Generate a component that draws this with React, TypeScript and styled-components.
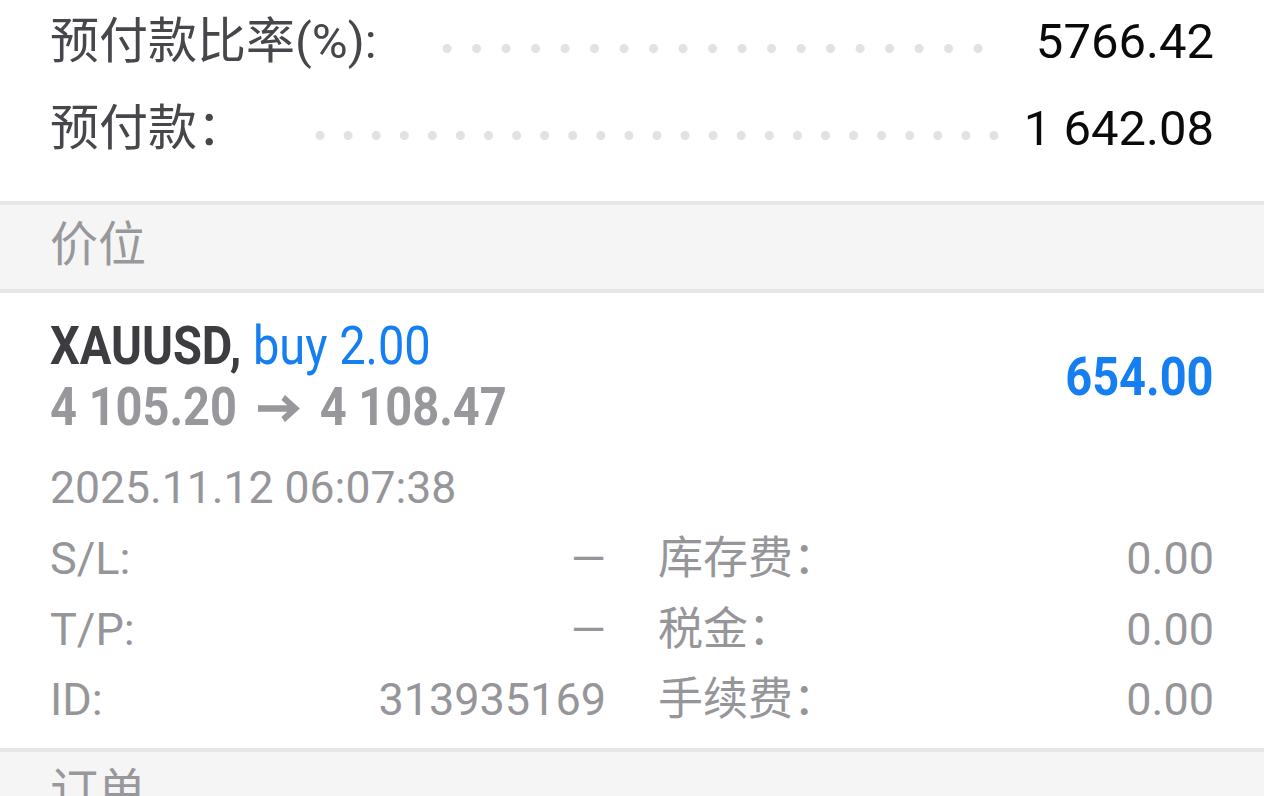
import React from "react";
import styled, { createGlobalStyle } from "styled-components";

const GlobalStyle = createGlobalStyle`
  html, body {
    margin: 0;
    padding: 0;
    background: #ffffff;
    overflow: hidden;
  }
  body {
    font-family: Roboto, "Noto Sans CJK SC", "Noto Sans", sans-serif;
    -webkit-font-smoothing: antialiased;
  }
`;

const Page = styled.div`
  width: 1264px;
  height: 796px;
  overflow: hidden;
  background: #ffffff;
  display: flex;
  flex-direction: column;
`;

const Summary = styled.div`
  display: flex;
  flex-direction: column;
  gap: 4px;
  padding: 0 50px 31px;
`;

const SummaryRow = styled.div`
  display: flex;
  align-items: center;
  height: 83px;
  line-height: 83px;
  font-size: 49px;
`;

const SummaryLabel = styled.span`
  color: #46464b;
  white-space: nowrap;
`;

const SummaryValue = styled.span`
  color: #0a0a0a;
  white-space: nowrap;
`;

const Leader = styled.span<{ $left: number; $right: number }>`
  flex: 1;
  height: 9px;
  margin: 13px ${(p) => p.$right}px 0 ${(p) => p.$left}px;
  background-image: radial-gradient(circle at 14px 4.5px, #e2e2e2 4.2px, transparent 4.8px);
  background-size: 28px 9px;
  background-repeat: space no-repeat;
`;

const SectionHeader = styled.div`
  flex: none;
  display: flex;
  align-items: center;
  box-sizing: content-box;
  height: 80px;
  padding: 0 50px 4px;
  background: #f5f5f5;
  border-top: 4px solid #e6e6e6;
  border-bottom: 4px solid #e6e6e6;
  font-size: 48px;
  line-height: 80px;
  color: #98989c;
`;

const Card = styled.div`
  flex: none;
  display: flex;
  flex-direction: column;
  padding: 22px 50px 12px;
`;

const CardHead = styled.div`
  display: flex;
  align-items: center;
  justify-content: space-between;
`;

const TitleBlock = styled.div`
  display: flex;
  flex-direction: column;
`;

const Condensed = styled.span<{ $origin: "left" | "right" }>`
  display: inline-block;
  white-space: nowrap;
  transform: scaleX(0.87);
  transform-origin: ${(p) => p.$origin} center;
`;

const TitleLine = styled.div`
  height: 61px;
  line-height: 61px;
  font-size: 54px;
`;

const Symbol = styled.span`
  font-weight: 700;
  color: #3c3c41;
`;

const Side = styled.span`
  font-weight: 400;
  color: #157ef0;
`;

const PriceLine = styled.div`
  height: 61px;
  line-height: 61px;
  font-size: 54px;
  font-weight: 700;
  color: #98989c;
`;

const ArrowIcon = styled.svg`
  display: inline-block;
  width: 50px;
  height: 27px;
  margin: 0 22px 0 23px;
  vertical-align: middle;
  position: relative;
  top: -2px;
`;

const Profit = styled.div`
  font-size: 54px;
  font-weight: 700;
  color: #157ef0;
  line-height: 61px;
`;

const DateLine = styled.div`
  margin-top: 15px;
  height: 72px;
  line-height: 72px;
  font-size: 44.5px;
  color: #96969a;
`;

const DetailGrid = styled.div`
  display: grid;
  grid-template-columns: 1fr 1fr;
  column-gap: 52px;
`;

const DetailRow = styled.div`
  display: flex;
  justify-content: space-between;
  align-items: center;
  height: 70.5px;
  line-height: 70.5px;
  font-size: 45px;
  color: #96969a;
  white-space: nowrap;
`;

const summary = [
  { label: "预付款比率(%):", value: "5766.42", left: 56, right: 44 },
  { label: "预付款：", value: "1 642.08", left: 60, right: 16 },
];

const details: [string, string][] = [
  ["S/L:", "—"],
  ["库存费：", "0.00"],
  ["T/P:", "—"],
  ["税金：", "0.00"],
  ["ID:", "313935169"],
  ["手续费：", "0.00"],
];

export default function App() {
  return (
    <Page>
      <GlobalStyle />
      <Summary>
        {summary.map((r) => (
          <SummaryRow key={r.label}>
            <SummaryLabel>{r.label}</SummaryLabel>
            <Leader $left={r.left} $right={r.right} />
            <SummaryValue>{r.value}</SummaryValue>
          </SummaryRow>
        ))}
      </Summary>

      <SectionHeader>价位</SectionHeader>

      <Card>
        <CardHead>
          <TitleBlock>
            <TitleLine>
              <Condensed $origin="left">
                <Symbol>XAUUSD,</Symbol> <Side>buy 2.00</Side>
              </Condensed>
            </TitleLine>
            <PriceLine>
              <Condensed $origin="left">
                4 105.20
                <ArrowIcon viewBox="0 0 50 27" aria-hidden="true">
                  <path
                    d="M1 13.5 H43 M30 2.5 L44 13.5 L30 24.5"
                    fill="none"
                    stroke="#98989c"
                    strokeWidth="6.5"
                    strokeLinejoin="miter"
                  />
                </ArrowIcon>
                4 108.47
              </Condensed>
            </PriceLine>
          </TitleBlock>
          <Profit>
            <Condensed $origin="right">654.00</Condensed>
          </Profit>
        </CardHead>

        <DateLine>2025.11.12 06:07:38</DateLine>

        <DetailGrid>
          {details.map(([label, value]) => (
            <DetailRow key={label}>
              <span>{label}</span>
              <span>{value}</span>
            </DetailRow>
          ))}
        </DetailGrid>
      </Card>

      <SectionHeader>订单</SectionHeader>
    </Page>
  );
}
